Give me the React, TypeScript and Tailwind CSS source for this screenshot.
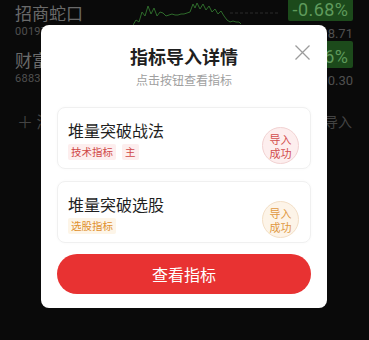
const CJK = { fontFamily: '"Noto Sans CJK SC", "Noto Sans", sans-serif' }
const NUM = { fontFamily: 'Roboto, "Noto Sans", sans-serif' }

interface Item {
  name: string
  tags: string[]
  tone: 'red' | 'orange'
}

const items: Item[] = [
  { name: '堆量突破战法', tags: ['技术指标', '主'], tone: 'red' },
  { name: '堆量突破选股', tags: ['选股指标'], tone: 'orange' },
]

function Sparkline() {
  const pts =
    '0,25 3,20 6,22 9,12 12,16 15,6 18,14 21,8 24,16 27,12 30,13 33,16 36,15 39,14 42,15 45,15 48,14 51,14 54,13 57,12 60,4 62,8 64,3 67,9 70,4 73,10 76,6 79,12 82,9 85,14 88,11 91,16 94,20 97,22 100,21 103,22 106,22 108,24'
  return (
    <svg width="150" height="28" viewBox="0 0 150 28" className="absolute left-[133px] top-0">
      <line x1="97" y1="13" x2="145" y2="13" stroke="#2a2a2a" strokeWidth="1" strokeDasharray="3 2" />
      <polyline points={pts} fill="none" stroke="#2e6a2b" strokeWidth="1" />
    </svg>
  )
}

function StockRow({ name, code, pct, price }: { name: string; code: string; pct: string; price: string }) {
  return (
    <div className="flex items-start justify-between pl-[15px] pr-[16px] h-[47px]">
      <div className="flex flex-col">
        <span className="text-[17px] leading-[25px] text-[#6a6a6a]" style={CJK}>
          {name}
        </span>
        <span className="text-[11px] leading-[14px] text-[#505050] tracking-wide" style={NUM}>
          {code}
        </span>
      </div>
      <div className="flex flex-col items-end">
        <div className="w-[65px] h-[27px] mt-[-6px] bg-[#1c4a1b] rounded-[2px] flex items-center justify-center">
          <span className="text-[18px] text-[#5f9a5c] tracking-wide pt-[4px]" style={NUM}>
            {pct}
          </span>
        </div>
        <span className="text-[13px] leading-[16px] mt-[5px] text-[#505050]" style={NUM}>
          {price}
        </span>
      </div>
    </div>
  )
}

function Stamp({ tone }: { tone: 'red' | 'orange' }) {
  const cls =
    tone === 'red'
      ? 'bg-[#fdeeee] border-[#f2d2d2] text-[#d24c4c]'
      : 'bg-[#fdf4e8] border-[#f3dfc6] text-[#e0983f]'
  return (
    <div
      className={`absolute right-[11px] top-[19px] w-[37px] h-[37px] rounded-full border flex flex-col items-center justify-center text-[11px] leading-[14px] ${cls}`}
      style={CJK}
    >
      <span>导入</span>
      <span>成功</span>
    </div>
  )
}

function Card({ item }: { item: Item }) {
  const tagCls =
    item.tone === 'red' ? 'bg-[#fdeeee] text-[#d04848]' : 'bg-[#fdf5e8] text-[#e0902e]'
  return (
    <div className="relative h-[62px] rounded-[8px] border border-[#f0f0f0] pt-[10px] pl-[10px] shadow-[0_0_3px_rgba(0,0,0,0.03)]">
      <div className="text-[16px] leading-[24px] text-[#1f1f1f]" style={CJK}>
        {item.name}
      </div>
      <div className="flex gap-[6px] mt-[2px]">
        {item.tags.map(t => (
          <span key={t} className={`h-[16px] px-[3px] text-[10.5px] leading-[16px] rounded-[2px] ${tagCls}`} style={CJK}>
            {t}
          </span>
        ))}
      </div>
      <Stamp tone={item.tone} />
    </div>
  )
}

export default function App() {
  return (
    <div className="relative w-[369px] h-[340px] overflow-hidden bg-[#0a0a0a]">
      <Sparkline />
      <div className="relative">
        <StockRow name="招商蛇口" code="001979" pct="-0.68%" price="8.71" />
        <StockRow name="财富趋势" code="688318" pct="-1.26%" price="90.30" />
        <div className="flex items-center justify-between pl-[17px] pr-[17px] mt-[17px]">
          <span className="text-[16px] leading-[20px] text-[#444]" style={CJK}>
            ＋ 添加自选
          </span>
          <span className="text-[14px] leading-[20px] text-[#444]" style={CJK}>
            导入
          </span>
        </div>
      </div>

      <div className="absolute left-[41px] top-[25px] w-[286px] h-[283px] bg-white rounded-[8px] px-[16px] pt-[18px]">
        <button className="absolute right-[17px] top-[20px]">
          <svg width="15" height="15" viewBox="0 0 15 15">
            <path d="M0.5 0.5 L14.5 14.5 M14.5 0.5 L0.5 14.5" stroke="#9c9c9c" strokeWidth="1.3" fill="none" />
          </svg>
        </button>
        <div className="text-center text-[18px] leading-[26px] font-bold text-[#1f1f1f]" style={CJK}>
          指标导入详情
        </div>
        <div className="text-center text-[12px] leading-[18px] mt-[2px] text-[#a0a0a0]" style={CJK}>
          点击按钮查看指标
        </div>
        <div className="flex flex-col gap-[12px] mt-[18px]">
          {items.map(it => (
            <Card key={it.name} item={it} />
          ))}
        </div>
        <button
          className="mt-[11px] w-full h-[40px] rounded-full bg-[#e83232] text-white text-[16px] flex items-center justify-center"
          style={CJK}
        >
          查看指标
        </button>
      </div>
    </div>
  )
}
